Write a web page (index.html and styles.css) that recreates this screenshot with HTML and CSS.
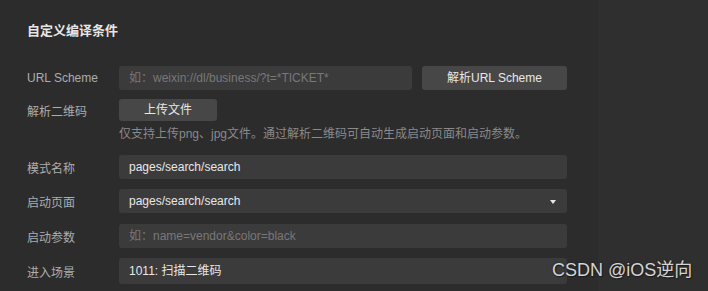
FILE: index.html
```html
<!DOCTYPE html>
<html lang="zh">
<head>
<meta charset="utf-8">
<link rel="stylesheet" href="styles.css">
</head>
<body>
<div class="panel">
  <h2 class="title">自定义编译条件</h2>
  <div class="row r1">
    <div class="label">URL Scheme</div>
    <div class="field">
      <div class="input short placeholder">如：weixin://dl/business/?t=*TICKET*</div>
      <div class="btn wide">解析URL Scheme</div>
    </div>
  </div>
  <div class="row r2">
    <div class="label">解析二维码</div>
    <div class="field">
      <div class="btn upload">上传文件</div>
    </div>
  </div>
  <div class="hint">仅支持上传png、jpg文件。通过解析二维码可自动生成启动页面和启动参数。</div>
  <div class="row r3">
    <div class="label">模式名称</div>
    <div class="field"><div class="input full">pages/search/search</div></div>
  </div>
  <div class="row r4">
    <div class="label">启动页面</div>
    <div class="field"><div class="input full select">pages/search/search<span class="arrow"></span></div></div>
  </div>
  <div class="row r5">
    <div class="label">启动参数</div>
    <div class="field"><div class="input full placeholder">如：name=vendor&amp;color=black</div></div>
  </div>
  <div class="row r6">
    <div class="label">进入场景</div>
    <div class="field"><div class="input full tall">1011: 扫描二维码</div></div>
  </div>
</div>
<div class="watermark">CSDN @iOS逆向</div>
</body>
</html>
```
FILE: styles.css
```css
html, body {
  margin: 0;
  padding: 0;
  height: 100%;
  overflow: hidden;
}
body {
  background: linear-gradient(to right, #2c2c2c 0, #2c2c2c 598px, #2f2f2f 598px);
  font-family: "Liberation Sans", "Noto Sans CJK SC", sans-serif;
  color: #dcdcdc;
  position: relative;
}
.panel {
  padding: 21px 0 0 27px;
}
.title {
  margin: 0;
  font-size: 13px;
  line-height: 20px;
  font-weight: bold;
  color: #e6e6e6;
}
.row {
  display: flex;
  align-items: center;
}
.r1 { margin-top: 25px; }
.r2 { margin-top: 9px; }
.r3 { margin-top: 13px; }
.r4 { margin-top: 10px; }
.r5 { margin-top: 11px; }
.r6 { margin-top: 10px; }
.label {
  width: 92px;
  font-size: 12px;
  color: #adadad;
}
.field {
  display: flex;
  gap: 10px;
}
.input {
  box-sizing: border-box;
  height: 24px;
  line-height: 24px;
  padding: 0 10px;
  background: #3b3b3b;
  border-radius: 3px;
  font-size: 12px;
  color: #e8e8e8;
  white-space: nowrap;
  position: relative;
}
.input.tall { height: 26px; line-height: 26px; }
.input.short { width: 293px; }
.input.full { width: 448px; }
.input.placeholder { color: #787878; }
.btn {
  box-sizing: border-box;
  height: 24px;
  line-height: 24px;
  background: #474747;
  border-radius: 3px;
  font-size: 12px;
  color: #e8e8e8;
  text-align: center;
}
.btn.wide { width: 145px; }
.btn.upload { width: 98px; height: 22px; line-height: 22px; }
.hint {
  margin: 5px 0 0 92px;
  font-size: 12px;
  line-height: 16px;
  color: #8a8a8a;
}
.arrow {
  position: absolute;
  right: 11px;
  top: 11px;
  width: 0;
  height: 0;
  border-left: 3px solid transparent;
  border-right: 3px solid transparent;
  border-top: 4px solid #e8e8e8;
}
.watermark {
  position: absolute;
  left: 552px;
  top: 259px;
  font-size: 18px;
  line-height: 22px;
  color: #d4d4d4;
  font-family: "Liberation Sans", "Noto Sans CJK SC", sans-serif;
  text-shadow: 0 0 2px #1e1e1e, 1px 1px 1px #1e1e1e;
}
```
